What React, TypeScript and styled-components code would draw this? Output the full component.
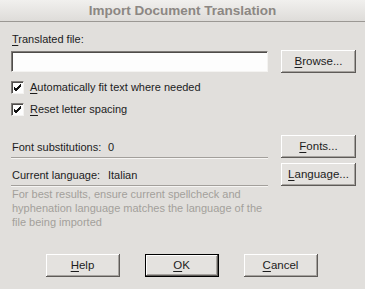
import React from "react";
import styled, { createGlobalStyle, css } from "styled-components";

const Global = createGlobalStyle`
  html, body { margin: 0; padding: 0; background: #e1dfdc; }
  * { box-sizing: border-box; }
`;

const Dialog = styled.div`
  width: 365px;
  height: 289px;
  background: #e1dfdc;
  font-family: "Liberation Sans", Arial, sans-serif;
  font-size: 11px;
  color: #1c1c1c;
  display: flex;
  flex-direction: column;
  overflow: hidden;
`;

const TitleBar = styled.div`
  height: 22px;
  flex: none;
  background: linear-gradient(#f1f0ee, #dedcd9);
  border-bottom: 1px solid #9b9894;
  display: flex;
  align-items: center;
  justify-content: center;
  font-size: 13.5px;
  font-weight: bold;
  color: #8c8783;
  padding-bottom: 1px;
`;

const Body = styled.div`
  display: flex;
  flex-direction: column;
  padding: 0 9px 0 11px;
`;

const Label = styled.div`
  margin-top: 10px;
  line-height: 14px;
  height: 14px;
  padding-left: 1px;
`;

const Row = styled.div<{ $mt: number }>`
  display: flex;
  justify-content: space-between;
  align-items: center;
  margin-top: ${(p) => p.$mt}px;
`;

const TextInput = styled.div`
  width: 257px;
  height: 21px;
  background: #fdfdfd;
  border-top: 1px solid #7e7b78;
  border-left: 1px solid #7e7b78;
  border-right: 1px solid #f4f3f1;
  border-bottom: 1px solid #f4f3f1;
  box-shadow: inset 1px 1px 0 #4f4c4a;
`;

const Button = styled.button<{ $default?: boolean; $w?: number }>`
  width: ${(p) => p.$w ?? 75}px;
  height: 23px;
  padding: 0;
  margin: 0;
  font: inherit;
  font-size: 11.5px;
  color: #1c1c1c;
  background: #e4e2df;
  border: none;
  box-shadow: inset -1px -1px 0 #5e5b58, inset 1px 1px 0 #ffffff,
    inset -2px -2px 0 #a6a39f;
  ${(p) =>
    p.$default &&
    css`
      border: 1px solid #000;
    `}
  text-align: center;
  line-height: 21px;
`;

const Key = styled.span`
  text-decoration: underline;
  text-underline-offset: 2px;
`;

const CheckRow = styled.label<{ $mt: number }>`
  display: flex;
  align-items: center;
  gap: 6px;
  height: 14px;
  margin-top: ${(p) => p.$mt}px;
  line-height: 14px;
`;

const Box = styled.span`
  width: 13px;
  height: 13px;
  flex: none;
  background: #fdfdfd;
  border-top: 1px solid #7e7b78;
  border-left: 1px solid #7e7b78;
  border-right: 1px solid #f4f3f1;
  border-bottom: 1px solid #f4f3f1;
  box-shadow: inset 1px 1px 0 #4f4c4a;
  display: flex;
  align-items: center;
  justify-content: center;
`;

const InfoField = styled.div`
  width: 257px;
  height: 22px;
  display: flex;
  align-items: flex-end;
  border-bottom: 1px solid #a29f9b;
  box-shadow: 0 1px 0 #f6f5f3;
  padding-bottom: 3px;
  line-height: 14px;
  white-space: nowrap;
`;

const InfoName = styled.span`
  width: 97px;
  padding-left: 1px;
`;

const Hint = styled.div`
  width: 262px;
  margin-top: 1px;
  line-height: 14px;
  color: #a39f9b;
  padding-left: 1px;
`;

const Footer = styled.div`
  display: flex;
  justify-content: center;
  gap: 25px;
  margin-top: 25px;
  padding-right: 2px;
`;

const Check = () => (
  <svg width="9" height="9" viewBox="0 0 9 9">
    <path d="M1 4 L3 6 L8 1 M1 5 L3 7 L8 2 M1 6 L3 8 L8 3" stroke="#111" strokeWidth="1" fill="none" />
  </svg>
);

export default function App() {
  return (
    <Dialog>
      <Global />
      <TitleBar>Import Document Translation</TitleBar>
      <Body>
        <Label>
          <Key>T</Key>ranslated file:
        </Label>
        <Row $mt={4}>
          <TextInput />
          <Button>
            <Key>B</Key>rowse...
          </Button>
        </Row>
        <CheckRow $mt={7}>
          <Box>
            <Check />
          </Box>
          <span>
            <Key>A</Key>utomatically fit text where needed
          </span>
        </CheckRow>
        <CheckRow $mt={8}>
          <Box>
            <Check />
          </Box>
          <span>
            <Key>R</Key>eset letter spacing
          </span>
        </CheckRow>
        <Row $mt={19}>
          <InfoField>
            <InfoName>Font substitutions:</InfoName>
            <span>0</span>
          </InfoField>
          <Button>
            <Key>F</Key>onts...
          </Button>
        </Row>
        <Row $mt={5}>
          <InfoField>
            <InfoName>Current language:</InfoName>
            <span>Italian</span>
          </InfoField>
          <Button>
            <Key>L</Key>anguage...
          </Button>
        </Row>
        <Hint>
          For best results, ensure current spellcheck and hyphenation language
          matches the language of the file being imported
        </Hint>
      </Body>
      <Footer>
        <Button $w={74}>
          <Key>H</Key>elp
        </Button>
        <Button $w={74} $default>
          <Key>O</Key>K
        </Button>
        <Button $w={74}>
          <Key>C</Key>ancel
        </Button>
      </Footer>
    </Dialog>
  );
}
